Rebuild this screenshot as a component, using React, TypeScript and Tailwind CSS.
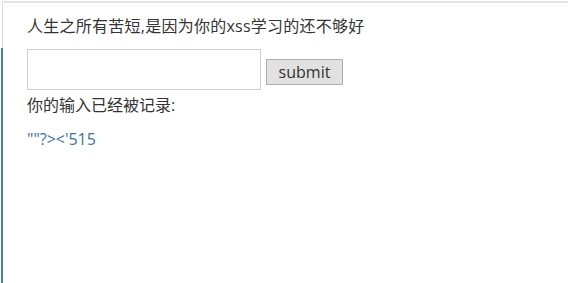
export default function App() {
  const font = { fontFamily: '"Open Sans", "Noto Sans CJK SC", sans-serif' };
  return (
    <div className="w-[568px] h-[283px] bg-white overflow-hidden" style={font}>
      <div className="h-[1px] bg-white" />
      <div className="flex h-[282px]">
        <div className="w-[2px] shrink-0" />
        <div className="flex flex-col w-[2px] shrink-0">
          <div className="h-[47px] bg-[#d8d8d8] w-[1px] ml-[0px]" />
          <div className="flex-1 bg-[#4a7f9f] w-[2px] -ml-[1px]" />
        </div>
        <div className="flex-1 flex flex-col">
          <div className="h-[2px] bg-[#e4e4e4]" />
          <div className="h-[3px]" />
          <div className="h-[1px] bg-[#f6f6f6]" />
          <div className="pl-[23px] pt-[10px] text-[#333] text-[16px] leading-[18px]">
            <div className="tracking-[0.25px]">人生之所有苦短,是因为你的xss学习的还不够好</div>
            <div className="flex items-center gap-[5px] mt-[14px]">
              <div className="w-[234px] h-[41px] border border-[#d0d0d0] bg-white" />
              <button className="h-[26px] px-[11px] mt-[4px] bg-[#e1e1e1] border border-[#adadad] text-[16px] leading-[18px] text-[#333] w-[77px]" style={font}>
                submit
              </button>
            </div>
            <div className="mt-[4px] leading-[22px]">你的输入已经被记录:</div>
            <div className="mt-[13px] text-[16px] leading-[20px] text-[#3d73a6]">{`""?><'515`}</div>
          </div>
        </div>
      </div>
    </div>
  );
}
